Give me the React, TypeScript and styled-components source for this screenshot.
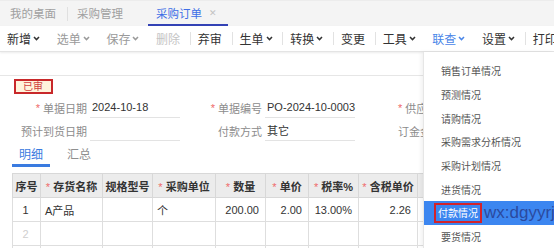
import React from "react";
import styled, { createGlobalStyle } from "styled-components";

const GlobalStyle = createGlobalStyle`
  body {
    margin: 0;
    background: #fff;
    font-family: "Liberation Sans", "Noto Sans CJK SC", sans-serif;
  }
`;

interface IToolItem {
  label: string;
  arrow?: boolean;
  tone?: "normal" | "muted" | "faint" | "link";
  sep?: boolean;
}

const toolItems: IToolItem[] = [
  { label: "新增", arrow: true },
  { label: "选单", arrow: true, tone: "muted" },
  { label: "保存", arrow: true, tone: "muted" },
  { label: "删除", tone: "faint", sep: true },
  { label: "弃审", sep: true },
  { label: "生单", arrow: true, sep: true },
  { label: "转换", arrow: true, sep: true },
  { label: "变更", sep: true },
  { label: "工具", arrow: true },
  { label: "联查", arrow: true, tone: "link" },
  { label: "设置", arrow: true, sep: true },
  { label: "打印" }
];

const menuItems = [
  "销售订单情况",
  "预测情况",
  "请购情况",
  "采购需求分析情况",
  "采购计划情况",
  "进货情况",
  "付款情况",
  "要货情况"
];

// the columns after 含税单价 sit under the open menu
const columns = [
  { title: "序号", w: 28 },
  { title: "存货名称", w: 62, req: true },
  { title: "规格型号", w: 50 },
  { title: "采购单位", w: 63, req: true },
  { title: "数量", w: 50, req: true },
  { title: "单价", w: 43, req: true },
  { title: "税率%", w: 50, req: true },
  { title: "含税单价", w: 59, req: true },
  { title: "", w: 60 }
];

const toneColor = {
  normal: "#333",
  muted: "#9a9a9a",
  faint: "#c4c4c4",
  link: "#4a86e8"
};

function Chevron({ color }: { color: string }) {
  return (
    <svg width="7" height="5" viewBox="0 0 7 5">
      <polyline points="1,1 3.5,3.6 6,1" fill="none" stroke={color} strokeWidth="1.5" />
    </svg>
  );
}

export default function App() {
  return (
    <Page>
      <GlobalStyle />
      <TabBar>
        <Tab $w={66}>我的桌面</Tab>
        <TabSep />
        <Tab $w={80}>采购管理</Tab>
        <Tab $w={80} $active>
          采购订单
          <Close>✕</Close>
        </Tab>
      </TabBar>

      <Toolbar>
        {toolItems.map((item) => {
          const color = toneColor[item.tone || "normal"];
          return (
            <React.Fragment key={item.label}>
              <ToolButton $color={color}>
                {item.label}
                {item.arrow && <Chevron color={color} />}
              </ToolButton>
              {item.sep && <ToolSep />}
            </React.Fragment>
          );
        })}
      </Toolbar>

      <Main>
        <HeadStrip />
        <Badge>已审</Badge>

        <FormGrid>
          <Label>
            <Req>*</Req>单据日期
          </Label>
          <Value>2024-10-18</Value>
          <Label>
            <Req>*</Req>单据编号
          </Label>
          <Value>PO-2024-10-0003</Value>
          <Label $left>
            <Req>*</Req>供应商
          </Label>

          <Label>预计到货日期</Label>
          <Value />
          <Label>付款方式</Label>
          <Value>其它</Value>
          <Label $left>订金金额</Label>
        </FormGrid>

        <SubTabs>
          <SubTab $active>明细</SubTab>
          <SubTab>汇总</SubTab>
        </SubTabs>

        <Grid>
          <colgroup>
            {columns.map((c, i) => (
              <col key={i} style={{ width: c.w }} />
            ))}
          </colgroup>
          <thead>
            <tr>
              {columns.map((c, i) => (
                <Th key={i}>
                  {c.req && <Req>*</Req>}
                  {c.title}
                </Th>
              ))}
            </tr>
          </thead>
          <tbody>
            <tr>
              <Td $align="center">1</Td>
              <Td>A产品</Td>
              <Td />
              <Td>个</Td>
              <Td $align="right">200.00</Td>
              <Td $align="right">2.00</Td>
              <Td $align="right">13.00%</Td>
              <Td $align="right">2.26</Td>
              <Td />
            </tr>
            {[2, 3].map((n) => (
              <tr key={n}>
                <Td $align="center" $dim>
                  {n}
                </Td>
                {columns.slice(1).map((c, i) => (
                  <Td key={i} />
                ))}
              </tr>
            ))}
          </tbody>
        </Grid>
      </Main>

      <Menu>
        {menuItems.map((m) =>
          m === "付款情况" ? (
            <MenuItem key={m} $active>
              <Marked>{m}</Marked>
              <Watermark>wx:dgyyrj</Watermark>
            </MenuItem>
          ) : (
            <MenuItem key={m}>{m}</MenuItem>
          )
        )}
      </Menu>
    </Page>
  );
}

const Page = styled.div`
  position: relative;
  width: 554px;
  height: 248px;
  overflow: hidden;
  background: #fff;
`;

const TabBar = styled.div`
  display: flex;
  align-items: stretch;
  height: 26px;
  padding-left: 1px;
  background: #f4f4f4;
  border-top: 1px solid #ececec;
  box-sizing: border-box;
`;

const Tab = styled.div<{ $w: number; $active?: boolean }>`
  display: flex;
  align-items: center;
  box-sizing: border-box;
  width: ${(p) => p.$w}px;
  padding: 0 ${(p) => (p.$active ? 0 : 9)}px 0 ${(p) => (p.$active ? 8 : 9)}px;
  font-size: 11.5px;
  color: ${(p) => (p.$active ? "#3f6fe6" : "#a0a0a0")};
  border-bottom: 2px solid ${(p) => (p.$active ? "#3342b5" : "transparent")};
`;

const TabSep = styled.div`
  width: 1px;
  height: 14px;
  align-self: center;
  background: #e0e0e0;
`;

const Close = styled.span`
  margin-left: 7px;
  font-size: 9px;
  color: #c2c2c2;
`;

const Toolbar = styled.div`
  display: flex;
  align-items: center;
  height: 25px;
  background: #fff;
  border-bottom: 1px solid #e4e4e4;
  box-shadow: 0 1px 2px rgba(0, 0, 0, 0.08);
  white-space: nowrap;
`;

const ToolButton = styled.div<{ $color: string }>`
  display: flex;
  align-items: center;
  gap: 2px;
  flex: none;
  padding: 0 9.7px 0 7px;
  font-size: 12px;
  color: ${(p) => p.$color};
`;

const ToolSep = styled.div`
  flex: none;
  width: 1px;
  height: 13px;
  background: #e2e2e2;
`;

const Main = styled.div`
  display: flex;
  flex-direction: column;
  align-items: flex-start;
`;

const HeadStrip = styled.div`
  align-self: stretch;
  height: 23px;
  border-bottom: 1px solid #e6e6e6;
`;

const Badge = styled.div`
  margin: 3px 0 0 14px;
  width: 39px;
  height: 15px;
  box-sizing: border-box;
  border: 2px solid #c8282a;
  background: #fff4dc;
  color: #d04040;
  font-size: 10px;
  line-height: 11px;
  padding-left: 7px;
`;

const FormGrid = styled.div`
  display: grid;
  grid-template-columns: 78px 90px 85px 90px 100px;
  grid-auto-rows: 23px;
  margin: 2px 0 0 12px;
  font-size: 11px;
`;

const Label = styled.div<{ $left?: boolean }>`
  display: flex;
  align-items: center;
  justify-content: ${(p) => (p.$left ? "flex-start" : "flex-end")};
  padding: ${(p) => (p.$left ? "0 0 0 43px" : "0 3px 0 0")};
  color: #8c8c8c;
  white-space: nowrap;
`;

const Value = styled.div`
  display: flex;
  align-items: center;
  padding-left: 2px;
  margin-bottom: 1px;
  color: #333;
  border-bottom: 1px solid #e3e3e3;
  white-space: nowrap;
`;

const Req = styled.span`
  color: #ef6a6a;
  margin-right: 3px;
  font-weight: normal;
`;

const SubTabs = styled.div`
  display: flex;
  gap: 10px;
  margin: 1px 0 0 12px;
  height: 24px;
`;

const SubTab = styled.div<{ $active?: boolean }>`
  display: flex;
  align-items: center;
  padding: 0 7px;
  font-size: 12px;
  color: ${(p) => (p.$active ? "#3a7be0" : "#8f8f8f")};
  border-bottom: 3px solid ${(p) => (p.$active ? "#3a7be0" : "transparent")};
`;

const Grid = styled.table`
  margin: 6px 0 0 12px;
  border-collapse: collapse;
  table-layout: fixed;
  width: 465px;
  font-size: 11px;
  color: #333;
`;

const Th = styled.th`
  height: 23px;
  padding: 0;
  background: #ececec;
  border: 1px solid #d8d8d8;
  font-weight: bold;
  text-align: center;
  white-space: nowrap;
  overflow: hidden;
`;

const Td = styled.td<{ $align?: "left" | "center" | "right"; $dim?: boolean }>`
  height: 23px;
  padding: 0 6px 0 4px;
  border: 1px solid #dedede;
  text-align: ${(p) => p.$align || "left"};
  color: ${(p) => (p.$dim ? "#cfcfcf" : "#333")};
  white-space: nowrap;
`;

const Menu = styled.div`
  position: absolute;
  left: 423px;
  top: 52px;
  right: 0;
  bottom: 0;
  padding-top: 7px;
  background: #fff;
  border-left: 1px solid #e6e6e6;
  box-shadow: -2px 0 4px rgba(0, 0, 0, 0.06);
`;

const MenuItem = styled.div<{ $active?: boolean }>`
  display: flex;
  align-items: center;
  height: 23.7px;
  padding-left: 17px;
  font-size: 10px;
  white-space: nowrap;
  color: ${(p) => (p.$active ? "#fff" : "#555")};
  background: ${(p) => (p.$active ? "#3c86f0" : "transparent")};
`;

const Marked = styled.span`
  margin-left: -7px;
  padding: 0 2px;
  height: 20px;
  box-sizing: border-box;
  border: 2px solid #d3232a;
  display: flex;
  align-items: center;
`;

const Watermark = styled.span`
  margin-left: 2px;
  font-size: 17px;
  font-family: "Liberation Sans", Arial, sans-serif;
  color: #2b4a9e;
`;
